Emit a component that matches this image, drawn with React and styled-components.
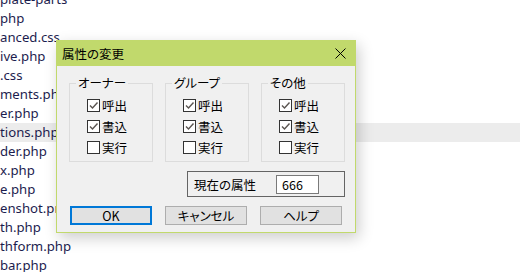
import React from "react";
import styled, { createGlobalStyle } from "styled-components";

const Global = createGlobalStyle`
  html, body {
    margin: 0;
    padding: 0;
    background: #ffffff;
  }
  body {
    width: 520px;
    height: 272px;
    overflow: hidden;
  }
`

const Screen = styled.div`
  position: relative;
  width: 520px;
  height: 272px;
  overflow: hidden;
  background: #fff;
`

const FileList = styled.ul`
  list-style: none;
  margin: -10px 0 0 0;
  padding: 0;
`

const FileRow = styled.li`
  height: 19px;
  line-height: 19px;
  font-family: "Noto Sans", "Open Sans", sans-serif;
  font-size: 13.2px;
  color: #1c1c4e;
  white-space: nowrap;
  background: ${p => (p.$active ? "#ececec" : "transparent")};
`

const Dialog = styled.div`
  position: absolute;
  left: 56px;
  top: 40px;
  width: 300px;
  display: flex;
  flex-direction: column;
  box-shadow: 3px 5px 14px rgba(0, 0, 0, 0.2);
  font-family: "Noto Sans CJK JP", "Noto Sans", sans-serif;
  font-feature-settings: "palt";
  font-size: 12.5px;
  color: #000;
`

const TitleBar = styled.div`
  height: 26px;
  background: #c1d96c;
  display: flex;
  align-items: center;
  justify-content: space-between;
  padding: 0 10px 0 6px;
  font-size: 12.5px;
`

const Body = styled.div`
  background: #f0f0f0;
  border: 1px solid #c1d96c;
  border-top: none;
  padding: 9px 10px 7px 12px;
  display: flex;
  flex-direction: column;
`

const Groups = styled.div`
  display: flex;
  gap: 12px;
`

const Group = styled.fieldset`
  margin: 0;
  width: 84px;
  box-sizing: border-box;
  min-width: 0;
  border: 1px solid #dcdcdc;
  padding: 4px 0 3px 0;
`

const Legend = styled.legend`
  margin-left: 6px;
  padding: 0 2px;
  line-height: 16px;
`

const Rows = styled.div`
  padding-left: 17px;
`

const CheckRow = styled.label`
  height: 21px;
  display: flex;
  align-items: center;
  gap: 2px;
`

const Box = styled.span`
  width: 11px;
  height: 11px;
  border: 1px solid #333;
  background: #fff;
  display: flex;
  align-items: center;
  justify-content: center;
`

const AttrBox = styled.div`
  align-self: flex-end;
  margin-top: 9px;
  width: 158px;
  height: 26px;
  box-sizing: border-box;
  border: 1px solid #646464;
  display: flex;
  align-items: center;
  justify-content: space-between;
  padding: 0 25px 0 6px;
`

const AttrInput = styled.div`
  width: 43px;
  height: 19px;
  box-sizing: border-box;
  border: 1px solid #7a7a7a;
  background: #fff;
  padding-left: 5px;
  line-height: 17px;
`

const Buttons = styled.div`
  display: flex;
  gap: 13px;
  margin-top: 9px;
  padding-left: 1px;
`

const Button = styled.div`
  width: 82px;
  height: 19px;
  box-sizing: border-box;
  background: #e1e1e1;
  border: ${p => (p.$primary ? "2px solid #0078d7" : "1px solid #adadad")};
  display: flex;
  align-items: center;
  justify-content: center;
`

function Check({ checked, label }) {
  return (
    <CheckRow>
      <Box>
        {checked && (
          <svg width="11" height="11" viewBox="0 0 11 11">
            <path d="M2 5.5 L4.5 8 L9.5 2.5" fill="none" stroke="#5a5450" strokeWidth="1.4" />
          </svg>
        )}
      </Box>
      {label}
    </CheckRow>
  )
}

const files = [
  "plate-parts", "php", "anced.css", "ive.php", ".css", "ments.php", "er.php",
  "tions.php", "der.php", "x.php", "e.php", "enshot.png", "th.php", "thform.php", "bar.php",
]

const groups = ["オーナー", "グループ", "その他"]

export default function App() {
  return (
    <Screen>
      <Global />
      <FileList>
        {files.map((f, i) => (
          <FileRow key={f} $active={i === 7}>{f}</FileRow>
        ))}
      </FileList>
      <Dialog>
        <TitleBar>
          <span>属性の変更</span>
          <svg width="11" height="11" viewBox="0 0 11 11">
            <path d="M0.5 0.5 L10.5 10.5 M10.5 0.5 L0.5 10.5" stroke="#000" strokeWidth="1" />
          </svg>
        </TitleBar>
        <Body>
          <Groups>
            {groups.map(g => (
              <Group key={g}>
                <Legend>{g}</Legend>
                <Rows>
                  <Check checked label="呼出" />
                  <Check checked label="書込" />
                  <Check label="実行" />
                </Rows>
              </Group>
            ))}
          </Groups>
          <AttrBox>
            <span>現在の属性</span>
            <AttrInput>666</AttrInput>
          </AttrBox>
          <Buttons>
            <Button $primary>OK</Button>
            <Button>キャンセル</Button>
            <Button>ヘルプ</Button>
          </Buttons>
        </Body>
      </Dialog>
    </Screen>
  )
}
